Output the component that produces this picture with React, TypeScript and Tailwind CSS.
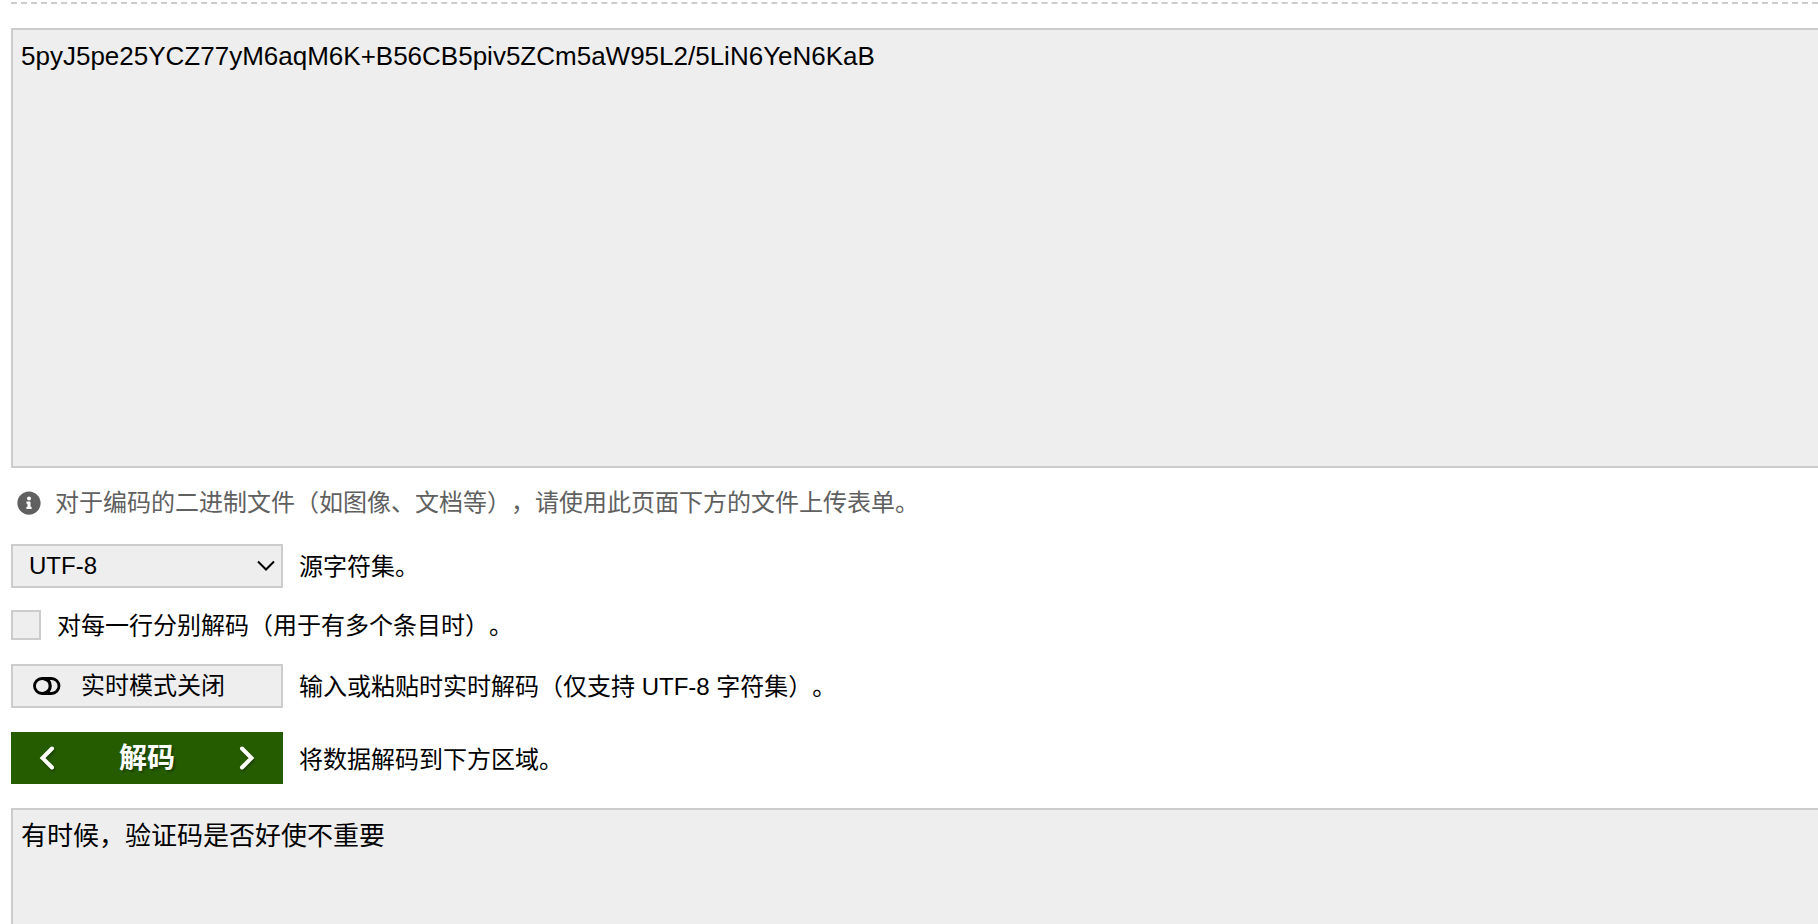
import { useState } from "react";
import { FaInfoCircle } from "react-icons/fa";

function ToggleIcon() {
  return (
    <svg aria-hidden="true" viewBox="0 0 28 18" className="h-[18px] w-7 shrink-0" fill="none" stroke="currentColor">
      <rect x="1.5" y="1.500" width="24.500" height="15" rx="7.500" strokeWidth="2.800" />
      <path d="M10.500 1.700C15 2.400 17.200 5.400 17.200 9C17.200 12.600 15 15.600 10.500 16.300" strokeWidth="3.200" />
    </svg>
  );
}

function Chevron({ direction }: { direction: "left" | "right" }) {
  return (
    <svg
      aria-hidden="true"
      viewBox="0 0 16 24"
      className="h-6 w-4 shrink-0 drop-shadow-[1px_2px_1px_rgba(0,0,0,0.3)]"
      fill="none"
      stroke="currentColor"
      strokeWidth="4"
      strokeLinecap="round"
      strokeLinejoin="miter"
    >
      <path d={direction === "left" ? "M13 2.500L3.500 12L13 21.500" : "M3 2.500L12.500 12L3 21.500"} />
    </svg>
  );
}

export default function App() {
  const [source, setSource] = useState("5pyJ5pe25YCZ77yM6aqM6K+B56CB5piv5ZCm5aW95L2/5LiN6YeN6KaB");

  return (
    <main
      lang="zh-CN"
      className="flex min-h-screen flex-col bg-white pt-0.5 pl-[11px] font-['Liberation_Sans','Noto_Sans_CJK_SC',sans-serif] text-2xl leading-8 text-black [text-spacing-trim:space-all]"
    >
      <hr className="border-t-2 border-dashed border-[#cccccc]" />
      <form className="flex grow flex-col pt-6" onSubmit={(e) => e.preventDefault()}>
        <textarea
          aria-label="Base64"
          value={source}
          onChange={(e) => setSource(e.target.value)}
          className="block h-[440px] w-full resize-none border-2 border-r-0 border-[#cccccc] bg-[#eeeeee] px-2 py-[10px] text-[26px] leading-8 outline-none"
        />
        <p className="mt-[19px] flex items-center gap-[14px] pl-1.5 text-[#606060]">
          <FaInfoCircle aria-hidden="true" className="size-6 shrink-0" />
          对于编码的二进制文件（如图像、文档等），请使用此页面下方的文件上传表单。
        </p>

        <div className="mt-[25px] flex items-center gap-4">
          <div className="relative w-[272px]">
            <select id="charset" className="block h-11 w-full appearance-none border-2 border-[#cccccc] bg-[#eeeeee] px-4 leading-8 outline-none">
              <option>UTF-8</option>
              <option>ASCII</option>
            </select>
            <svg
              aria-hidden="true"
              viewBox="0 0 18 12"
              className="pointer-events-none absolute top-4 right-2 h-3 w-[18px]"
              fill="none"
              stroke="currentColor"
              strokeWidth="2"
            >
              <path d="M1 1.500L9 9.500L17 1.500" />
            </svg>
          </div>
          <label htmlFor="charset" className="pt-0.5">源字符集。</label>
        </div>

        <div className="mt-[22px] flex items-start gap-4">
          <input id="lines" type="checkbox" className="size-[30px] appearance-none border-2 border-[#cccccc] bg-[#eeeeee] checked:bg-[#265c00]" />
          <label htmlFor="lines">对每一行分别解码（用于有多个条目时）。</label>
        </div>

        <div className="mt-[22px] flex items-center gap-4">
          <button type="button" className="flex h-11 w-[272px] items-center gap-5 border-2 border-[#cccccc] bg-[#eeeeee] px-5">
            <ToggleIcon />
            实时模式关闭
          </button>
          <span className="pt-0.5">输入或粘贴时实时解码（仅支持 UTF-8 字符集）。</span>
        </div>

        <div className="mt-6 flex items-center gap-4">
          <button
            type="submit"
            className="flex h-[52px] w-[272px] items-center justify-between bg-[#265c00] px-7 text-[28px] font-bold text-white [text-shadow:2px_2px_2px_rgba(0,0,0,0.3)]"
          >
            <Chevron direction="left" />
            <span className="pt-0.5">解码</span>
            <Chevron direction="right" />
          </button>
          <span className="pt-1">将数据解码到下方区域。</span>
        </div>

        <textarea
          aria-label="解码"
          readOnly
          value="有时候，验证码是否好使不重要"
          className="mt-6 block w-full grow resize-none border-2 border-r-0 border-b-0 border-[#cccccc] bg-[#eeeeee] px-2 py-[10px] text-[26px] leading-8 outline-none"
        />
      </form>
    </main>
  );
}
